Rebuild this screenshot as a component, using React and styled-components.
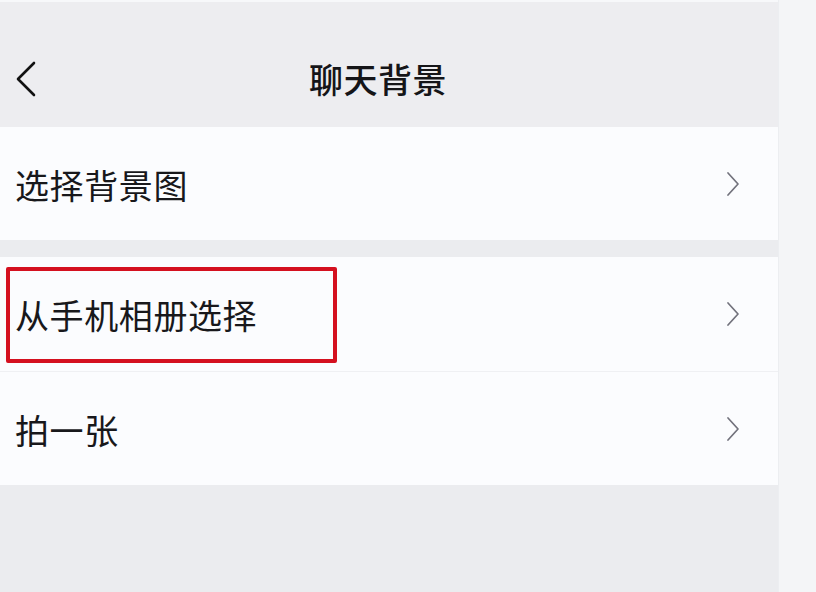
import React from 'react'
import styled, { createGlobalStyle } from 'styled-components'

const GlobalStyle = createGlobalStyle`
  html, body {
    margin: 0;
    padding: 0;
    background: #f3f4f6;
    font-family: "Noto Sans CJK SC", "Noto Sans", sans-serif;
  }
`

const Page = styled.div`
  display: flex;
  width: 816px;
  height: 592px;
  overflow: hidden;
  background: #f3f4f6;
`

const Main = styled.div`
  width: 778px;
  display: flex;
  flex-direction: column;
  background: #ebecef;
  border-top: 2px solid #f7f8fa;
`

const Side = styled.div`
  flex: 1;
  background: #f4f5f7;
  border-left: 1px solid #eceef1;
`

const Header = styled.div`
  height: 125px;
  display: grid;
  grid-template-columns: 60px 1fr 60px;
  align-items: center;
  background: #ededf0;
  padding-top: 28px;
  box-sizing: border-box;
`

const Back = styled.div`
  display: flex;
  padding-left: 15px;
  padding-top: 0;
`

const Title = styled.h1`
  margin: 0 0 0 -22px;
  text-align: center;
  font-size: 34px;
  font-weight: 500;
  color: #151518;
  letter-spacing: 0.5px;
`

const Group = styled.div`
  display: flex;
  flex-direction: column;
  background: #fbfcfe;
  margin-bottom: ${p => p.$gap || 0}px;
`

const Row = styled.div`
  position: relative;
  height: ${p => p.$h || 113}px;
  display: flex;
  align-items: center;
  justify-content: space-between;
  padding: 0 38px 0 15px;
  border-bottom: ${p => (p.$divider ? '1px solid #eff0f3' : 'none')};
`

const Label = styled.span`
  font-size: 34px;
  font-weight: 400;
  color: #18181b;
  letter-spacing: 0.6px;
  margin-top: ${p => p.$dy || 0}px;
`

const Highlight = styled.div`
  position: absolute;
  left: 6px;
  top: 10px;
  width: 331px;
  height: 96px;
  border: 4px solid #d4101f;
  border-radius: 2px;
  box-sizing: border-box;
`

const BackIcon = () => (
  <svg width="22" height="36" viewBox="0 0 22 36">
    <path d="M19 2 L3 18 L19 34" fill="none" stroke="#111" strokeWidth="2.6" strokeLinecap="round" strokeLinejoin="round" />
  </svg>
)

const Chevron = () => (
  <svg width="14" height="26" viewBox="0 0 14 26">
    <path d="M2 2 L12 13 L2 24" fill="none" stroke="#72727c" strokeWidth="1.7" strokeLinecap="round" strokeLinejoin="round" />
  </svg>
)

export default function App() {
  return (
    <>
      <GlobalStyle />
      <Page>
        <Main>
          <Header>
            <Back><BackIcon /></Back>
            <Title>聊天背景</Title>
            <span />
          </Header>
          <Group $gap={17}>
            <Row $h={113}>
              <Label $dy={2}>选择背景图</Label>
              <Chevron />
            </Row>
          </Group>
          <Group>
            <Row $h={114} $divider>
              <Highlight />
              <Label>从手机相册选择</Label>
              <Chevron />
            </Row>
            <Row $h={113}>
              <Label $dy={2}>拍一张</Label>
              <Chevron />
            </Row>
          </Group>
        </Main>
        <Side />
      </Page>
    </>
  )
}
